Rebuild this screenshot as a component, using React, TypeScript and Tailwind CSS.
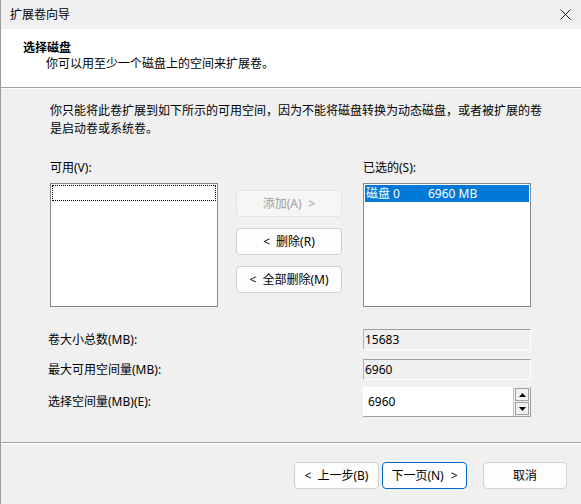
import React from "react"

const FONT = "font-['Noto_Sans','Noto_Sans_CJK_SC',sans-serif]"

function CloseIcon() {
  return (
    <svg width="11" height="11" viewBox="0 0 11 11" fill="none">
      <path d="M0.5 0.5L10.5 10.5M10.5 0.5L0.5 10.5" stroke="#1a1a1a" strokeWidth="1" />
    </svg>
  )
}

function Arrow({ up }: { up?: boolean }) {
  return (
    <svg width="7" height="4" viewBox="0 0 7 4">
      {up ? <path d="M0 4L3.5 0L7 4Z" fill="#000" /> : <path d="M0 0L7 0L3.5 4Z" fill="#000" />}
    </svg>
  )
}

type BtnProps = {
  children: React.ReactNode
  disabled?: boolean
  primary?: boolean
  className?: string
}

function Button({ children, disabled, primary, className = "" }: BtnProps) {
  const tone = disabled
    ? "border-[#e3e3e3] bg-[#f6f6f6] text-[#a0a0a0]"
    : primary
      ? "border-[#0067c0] bg-[#fdfdfd] text-black"
      : "border-[#d0d0d0] bg-[#fdfdfd] text-black"
  return (
    <div
      className={`flex h-[27px] items-center justify-center rounded-[4px] border text-[12px] leading-none ${tone} ${className}`}
    >
      {children}
    </div>
  )
}

// chevrons in the button captions sit a little apart from the text
const Lt = () => <span className="mr-[6px]">&lt;</span>
const Gt = () => <span className="ml-[7px]">&gt;</span>

function ReadOnlyField({ value }: { value: string }) {
  return (
    <div className="flex h-[21px] w-[168px] items-center border-t border-l border-r border-b border-t-[#a0a0a0] border-l-[#b4b4b4] border-r-white border-b-white bg-[#f0f0f0] pl-[1px] text-[12px]">
      {value}
    </div>
  )
}

export default function App() {
  return (
    <div
      className={`flex h-[504px] w-[581px] flex-col overflow-hidden border-l border-[#9a9a9a] bg-[#f0f0f0] text-black ${FONT}`}
    >
      {/* title bar */}
      <div className="flex h-[29px] shrink-0 items-center justify-between pl-[9px] pr-[10px] text-[12px]">
        <span>扩展卷向导</span>
        <CloseIcon />
      </div>

      {/* header */}
      <div className="h-[58px] shrink-0 bg-white pl-[22px] pt-[11px] text-[12px] leading-[16px]">
        <div className="font-bold">选择磁盘</div>
        <div className="ml-[23px]">你可以用至少一个磁盘上的空间来扩展卷。</div>
      </div>
      <div className="h-px shrink-0 bg-[#a0a0a0]" />
      <div className="h-px shrink-0 bg-white" />

      {/* body */}
      <div className="flex flex-1 flex-col pl-[47px] text-[12px]">
        <p className="ml-[2px] mt-[13px] w-[496px] leading-[18px]">
          你只能将此卷扩展到如下所示的可用空间，因为不能将磁盘转换为动态磁盘，或者被扩展的卷是启动卷或系统卷。
        </p>

        <div className="ml-[2px] mt-[22px] flex">
          <div className="w-[168px]">
            <div className="leading-[16px]">可用(V):</div>
            <div className="mt-[7px] h-[124px] border border-[#828790] bg-white p-px">
              <div className="h-[16px] border border-dotted border-black" />
            </div>
          </div>

          <div className="ml-[18px] flex w-[106px] flex-col gap-[11px] pt-[30px]">
            <Button disabled>
              添加(A)
              <Gt />
            </Button>
            <Button>
              <Lt />
              删除(R)
            </Button>
            <Button>
              <Lt />
              全部删除(M)
            </Button>
          </div>

          <div className="ml-[21px] w-[168px]">
            <div className="leading-[16px]">已选的(S):</div>
            <div className="mt-[7px] h-[124px] border border-[#828790] bg-white p-px">
              <div className="flex h-[17px] items-center bg-[#0078d7] pl-[1px] text-white">
                <span className="w-[62px]">磁盘 0</span>
                <span>6960 MB</span>
              </div>
            </div>
          </div>
        </div>

        <div className="mt-[22px] flex flex-col">
          <div className="flex items-center">
            <span className="w-[315px]">卷大小总数(MB):</span>
            <ReadOnlyField value="15683" />
          </div>
          <div className="mt-[9px] flex items-center">
            <span className="w-[315px]">最大可用空间量(MB):</span>
            <ReadOnlyField value="6960" />
          </div>
          <div className="mt-[7px] flex items-center">
            <span className="w-[315px]">选择空间量(MB)(E):</span>
            <div className="flex h-[30px] w-[168px] border-b border-r border-[#a0a0a0] bg-white">
              <div className="flex flex-1 items-center pl-[5px]">6960</div>
              <div className="flex w-[17px] flex-col gap-px border-l border-[#c8c8c8] bg-[#f0f0f0] p-px">
                <div className="flex flex-1 items-center justify-center border border-[#a0a0a0] bg-[#f0f0f0]">
                  <Arrow up />
                </div>
                <div className="flex flex-1 items-center justify-center border border-[#a0a0a0] bg-[#f0f0f0]">
                  <Arrow />
                </div>
              </div>
            </div>
          </div>
        </div>
      </div>

      <div className="h-px shrink-0 bg-[#a0a0a0]" />
      <div className="h-px shrink-0 bg-white" />

      {/* footer */}
      <div className="flex h-[60px] shrink-0 justify-end pr-[14px] pt-[18px]">
        <Button className="w-[85px]">
          <Lt />
          上一步(B)
        </Button>
        <Button primary className="ml-[3px] w-[85px]">
          下一页(N)
          <Gt />
        </Button>
        <Button className="ml-[16px] w-[84px]">取消</Button>
      </div>
    </div>
  )
}
